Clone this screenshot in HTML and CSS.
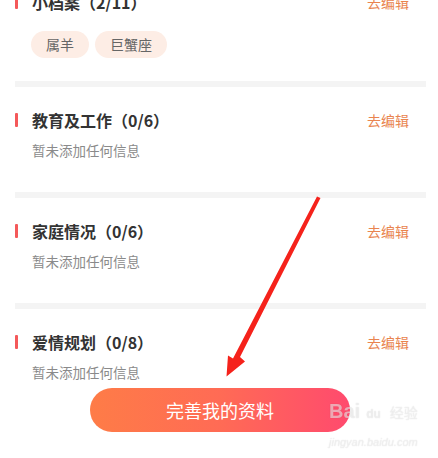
FILE: index.html
```html
<!DOCTYPE html>
<html>
<head>
<meta charset="utf-8">
<title>我的资料</title>
<link rel="stylesheet" href="styles.css">
</head>
<body>
<div class="page">
  <div class="sec sec_first">
    <div class="sec_hd">
      <h3 class="sec_tit">小档案（2/11）</h3>
      <a class="sec_edit" href="#">去编辑</a>
    </div>
    <ul class="tags">
      <li>属羊</li>
      <li>巨蟹座</li>
    </ul>
  </div>
  <div class="sec">
    <div class="sec_hd">
      <h3 class="sec_tit">教育及工作（0/6）</h3>
      <a class="sec_edit" href="#">去编辑</a>
    </div>
    <p class="sec_empty">暂未添加任何信息</p>
  </div>
  <div class="sec">
    <div class="sec_hd">
      <h3 class="sec_tit">家庭情况（0/6）</h3>
      <a class="sec_edit" href="#">去编辑</a>
    </div>
    <p class="sec_empty">暂未添加任何信息</p>
  </div>
  <div class="sec">
    <div class="sec_hd">
      <h3 class="sec_tit">爱情规划（0/8）</h3>
      <a class="sec_edit" href="#">去编辑</a>
    </div>
    <p class="sec_empty">暂未添加任何信息</p>
  </div>
</div>

<a class="btn_done" href="#">完善我的资料</a>

<svg class="arrow" width="438" height="458" viewBox="0 0 438 458">
  <polygon fill="#f5221b" points="317,196.5 320.5,198 240,357 245,361.5 226.5,376.5 228,355.5 233,358.5"/>
</svg>

<div class="mark">
  <div class="mark_logo"><span class="mark_bai">Bai</span><span class="mark_du">du</span><span class="mark_jy">经验</span></div>
  <div class="mark_url">jingyan.baidu.com</div>
</div>
</body>
</html>
```

FILE: styles.css
```css
* { margin:0; padding:0;}
body{ background:#fff; font:normal 14px/20px "Noto Sans CJK SC", "Noto Sans", sans-serif; color:#333; overflow:hidden;}
ul,li{ list-style:none;}
a{ text-decoration:none;}

.page{ margin:-9px 12px 0 15px;}
.sec{ padding:22px 0 32px; border-top:6px solid #f4f4f4;}
.sec_first{ padding:0 0 23px; border-top:none;}
.sec_hd{ position:relative; display:flex; align-items:center; justify-content:space-between; height:22px; padding-right:17px;}
.sec_hd::before{ content:""; position:absolute; left:0; top:4px; width:3px; height:14px; background:#f4595a; border-radius:1px;}
.sec_tit{ margin-left:17px; font-size:16px; line-height:22px; font-weight:bold; color:#333;}
.sec_edit{ font-size:14px; color:#e9844f;}
.sec_empty{ margin:9px 0 0 17px; font-size:13.5px; line-height:20px; color:#8a8a8a;}

.tags{ display:flex; gap:6px; margin:18px 0 0 16px;}
.tags li{ height:27px; line-height:27px; padding:0 15px; border-radius:14px; background:#fdede5; color:#666; font-size:14px;}

.btn_done{ position:fixed; left:90px; bottom:26px; width:260px; height:44px; line-height:44px; border-radius:22px; text-align:center; color:#fff; font-size:18px; background:linear-gradient(90deg, #fe7c47 0%, #ff6b55 50%, #ff4a6e 100%);}

.arrow{ position:fixed; left:0; top:0; pointer-events:none;}

.mark{ position:fixed; left:329px; top:398px; color:rgba(255,255,255,0.55); font-family:"Liberation Sans", "Noto Sans CJK SC", sans-serif; text-shadow:0 0 1px rgba(0,0,0,0.18); pointer-events:none;}
.mark_logo{ display:flex; align-items:flex-end; height:24px;}
.mark_bai{ font-size:20px; font-weight:bold; line-height:22px;}
.mark_du{ margin:0 6px 0 3px; font-size:12px; line-height:16px; font-weight:bold; padding:0 3px;}
.mark_jy{ font-size:14px; line-height:18px;}
.mark_url{ margin-top:14px; font-size:11px; line-height:12px; font-style:italic;}
```
